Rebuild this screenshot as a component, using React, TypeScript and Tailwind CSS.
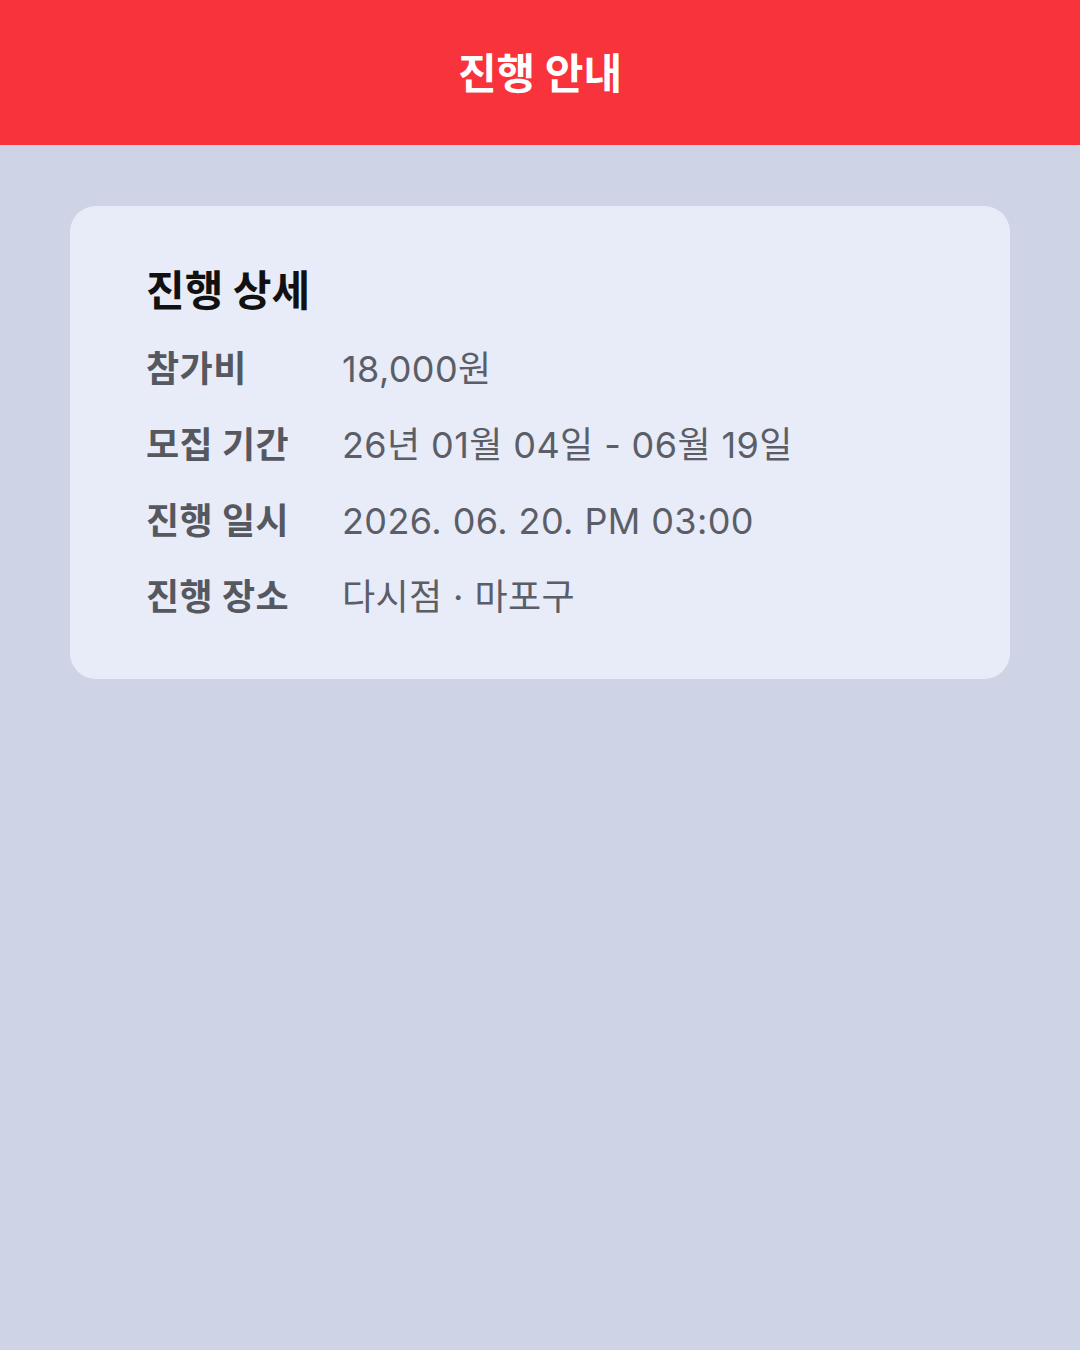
const rows = [
  { label: '참가비', value: '18,000원' },
  { label: '모집 기간', value: '26년 01월 04일 - 06월 19일' },
  { label: '진행 일시', value: '2026. 06. 20. PM 03:00' },
  { label: '진행 장소', value: '다시점 · 마포구' },
]

const App = () => {
  return (
    <div
      className="min-h-[1350px] w-full bg-[#ced4e6]"
      style={{ fontFamily: '"Noto Sans CJK KR", "Noto Sans", sans-serif' }}
    >
      <header className="flex h-[145px] items-center justify-center bg-[#f8333c] pb-[4px]">
        <h1 className="text-[42px] font-semibold leading-none text-white">진행 안내</h1>
      </header>

      <div className="px-[70px] pt-[61px]">
        <section className="rounded-[26px] bg-[#e8ebf8] px-[76px] pt-[54px] pb-[47px]">
          <h2 className="text-[42px] font-bold leading-[56px] text-[#111111]">진행 상세</h2>
          <div className="mt-[12px]">
            {rows.map((row) => (
              <div key={row.label} className="flex h-[76px] items-center text-[36px]">
                <div className="w-[196px] shrink-0 font-semibold tracking-[0.5px] text-[#55585f]">{row.label}</div>
                <div
                  className="pt-[6px] tracking-[0.4px] text-[#5b5e67]"
                  style={{ fontFamily: 'Inter, "Noto Sans CJK KR", sans-serif' }}
                >
                  {row.value}
                </div>
              </div>
            ))}
          </div>
        </section>
      </div>
    </div>
  )
}

export default App
